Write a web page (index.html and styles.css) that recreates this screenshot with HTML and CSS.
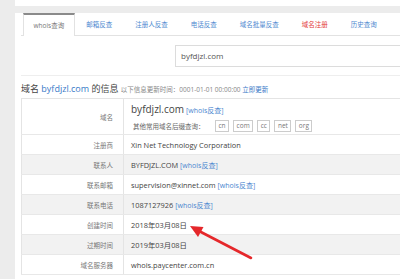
FILE: index.html
```html
<!DOCTYPE html>
<html>
<head>
<meta charset="utf-8">
<link rel="stylesheet" href="styles.css">
</head>
<body>
<div class="page">
  <div class="topcard"></div>
  <div class="card">
    <ul class="tabs">
      <li class="tab active">whois查询</li>
      <li class="tab">邮箱反查</li>
      <li class="tab">注册人反查</li>
      <li class="tab">电话反查</li>
      <li class="tab">域名批量反查</li>
      <li class="tab red">域名注册</li>
      <li class="tab">历史查询</li>
    </ul>
    <div class="search"><div class="input">byfdjzl.com</div></div>
    <div class="title">域名 <span class="blue">byfdjzl.com</span> 的信息 <span class="small">以下信息更新时间：0001-01-01 00:00:00 <span class="blue">立即更新</span></span></div>
    <table class="info">
      <tr class="first">
        <td class="label">域名</td>
        <td class="value">
          <div class="dom"><span class="big">byfdjzl.com</span> <span class="link">[whois反查]</span></div>
          <div class="sfx"><span class="sfx-label">其他常用域名后缀查询：</span><span class="box">cn</span><span class="box">com</span><span class="box">cc</span><span class="box">net</span><span class="box">org</span></div>
        </td>
      </tr>
      <tr><td class="label">注册商</td><td class="value">Xin Net Technology Corporation</td></tr>
      <tr class="alt"><td class="label">联系人</td><td class="value">BYFDJZL.COM <span class="link">[whois反查]</span></td></tr>
      <tr><td class="label">联系邮箱</td><td class="value">supervision@xinnet.com <span class="link">[whois反查]</span></td></tr>
      <tr class="alt"><td class="label">联系电话</td><td class="value">1087127926 <span class="link">[whois反查]</span></td></tr>
      <tr><td class="label">创建时间</td><td class="value">2018年03月08日</td></tr>
      <tr class="alt"><td class="label">过期时间</td><td class="value">2019年03月08日</td></tr>
      <tr><td class="label">域名服务器</td><td class="value">whois.paycenter.com.cn</td></tr>
    </table>
  </div>
  <svg class="arrow" width="400" height="279" viewBox="0 0 400 279">
    <line x1="251" y1="258" x2="199" y2="231" stroke="#e5282b" stroke-width="2.6" stroke-linecap="round"/>
    <polygon points="190,226 203.5,227 198,237" fill="#e5282b"/>
  </svg>
</div>
</body>
</html>
```
FILE: styles.css
```css
html, body {
  margin: 0;
  padding: 0;
  background: #ececec;
  overflow: hidden;
}
body {
  font-family: "Open Sans", "Noto Sans CJK SC", sans-serif;
  color: #333;
  width: 400px;
  height: 279px;
}
.page {
  position: relative;
  margin-left: 15px;
  width: 385px;
  height: 279px;
}
.topcard {
  height: 6px;
  background: #fff;
  margin-bottom: 7px;
}
.card {
  background: #fff;
  padding-left: 6px;
  height: 266px;
  overflow: hidden;
}
.tabs {
  list-style: none;
  margin: 0;
  padding: 0 0 0 2px;
  display: flex;
  height: 22px;
  border-bottom: 1px solid #e2e2e2;
  width: 500px;
}
.tab {
  font-size: 6.5px;
  line-height: 21px;
  color: #4d88cf;
  padding: 0 10.5px;
  border: 1px solid transparent;
  border-bottom: none;
  white-space: nowrap;
}
.tab.active {
  color: #777;
  border-color: #e2e2e2;
  border-top: 2px solid #8a8a8a;
  background: #fff;
  margin-bottom: -1px;
  padding: 0 9.5px;
}
.tab.red { color: #e33b3b; }
.search {
  padding: 9px 0 0 154px;
  height: 22px;
  border-bottom: 1px solid #eee;
  padding-bottom: 8px;
}
.input {
  width: 300px;
  border: 1px solid #dcdcdc;
  font-size: 8px;
  line-height: 20px;
  padding-left: 5px;
  color: #555;
  box-sizing: border-box;
  height: 22px;
}
.title {
  font-size: 9px;
  line-height: 14px;
  padding-top: 6px;
  height: 16px;
  color: #444;
  white-space: nowrap;
}
.blue { color: #3a7bc8; }
.small {
  font-size: 6.5px;
  color: #888;
}
.info {
  border-collapse: collapse;
  width: 420px;
  border: 1px solid #e4e4e4;
}
.info td {
  border-bottom: 1px solid #e8e8e8;
  height: 19px;
  padding: 0;
  font-size: 7.4px;
  white-space: nowrap;
}
.info tr.alt td { background: #f2f2f2; }
.label {
  width: 91px;
  text-align: right;
  padding-right: 10px !important;
  color: #777;
  font-size: 6.5px !important;
  border-right: 1px solid #e4e4e4;
}
.value {
  padding-left: 7px !important;
  color: #444;
}
.first td { height: 35px; }
.dom { line-height: 14px; }
.big { font-size: 10px; color: #444; }
.link { color: #4a86cf; font-size: 7px; }
.sfx {
  display: flex;
  align-items: center;
  margin-top: 2px;
  padding-left: 2px;
}
.sfx-label {
  font-size: 6.5px;
  color: #666;
  width: 82px;
  flex: none;
  overflow: hidden;
}
.box {
  display: inline-block;
  border: 1px solid #ccc;
  padding: 0 2.5px;
  height: 10px;
  line-height: 10px;
  font-size: 6.5px;
  color: #777;
  margin-right: 4px;
}
.arrow {
  position: absolute;
  left: -15px;
  top: 0;
  pointer-events: none;
}
```
